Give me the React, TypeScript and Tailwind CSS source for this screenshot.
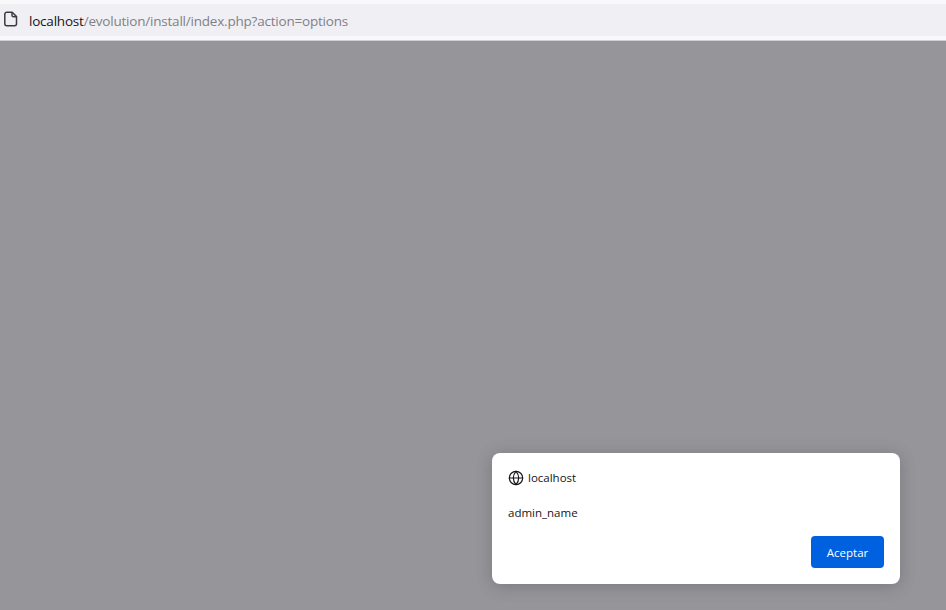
import { Globe } from 'lucide-react';

const font = { fontFamily: '"Open Sans", "Noto Sans", sans-serif' };

function UrlBar() {
  return (
    <div className="bg-[#f9f9fb] pt-[4px] h-[41px] shrink-0 border-b border-[#cfcfd8]">
      <div className="h-[32px] bg-[#f0f0f4] flex items-center">
        <svg width="14" height="16" viewBox="0 0 14 16" fill="none" className="ml-[4px] mb-[2px] text-[#3a3a40]">
          <path
            d="M2.8 1.2h5.4l4.3 4.3v7.2a2 2 0 0 1-2 2H2.8a2 2 0 0 1-2-2V3.2a2 2 0 0 1 2-2Z"
            stroke="currentColor"
            strokeWidth="1.5"
            strokeLinejoin="round"
          />
          <path d="M8 1.4v2.8a1.5 1.5 0 0 0 1.5 1.5h2.8" stroke="currentColor" strokeWidth="1.5" />
        </svg>
        <div className="ml-[11px] pt-[2px] text-[13.5px] tracking-[-0.21px] whitespace-nowrap text-[#808086]">
          <span className="text-[#15141a]">localhost</span>/evolution/install/index.php?action=options
        </div>
      </div>
    </div>
  );
}

function AlertDialog() {
  return (
    <div className="w-[408px] h-[131px] bg-white rounded-[8px] shadow-[0_2px_16px_rgba(58,57,68,0.3)] px-[16px] pt-[16px] flex flex-col">
      <div className="flex items-center gap-[4px] h-[17px]">
        <Globe size={16} strokeWidth={1.75} className="text-[#15141a]" />
        <span className="text-[11.5px] text-[#15141a]">localhost</span>
      </div>
      <div className="mt-[18px] text-[11.5px] leading-[17px] text-[#15141a]">admin_name</div>
      <div className="mt-[15px] flex justify-end">
        <button className="w-[73px] h-[32px] pt-[1px] bg-[#0061e0] rounded-[4px] text-white text-[11.5px]">Aceptar</button>
      </div>
    </div>
  );
}

export default function App() {
  return (
    <div className="w-[946px] h-[610px] flex flex-col overflow-hidden" style={font}>
      <UrlBar />
      <div className="flex-1 bg-[#969599] flex items-end justify-end pr-[46px] pb-[26px]">
        <AlertDialog />
      </div>
    </div>
  );
}
